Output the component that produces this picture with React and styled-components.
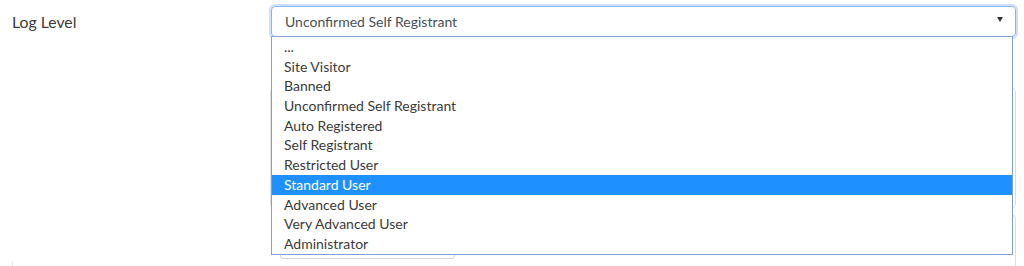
import React from "react";
import styled, { createGlobalStyle } from "styled-components";

const GlobalStyle = createGlobalStyle`
  html, body {
    margin: 0;
    background: #fff;
    overflow: hidden;
  }
  body {
    font-family: Lato, "Noto Sans", sans-serif;
    font-size: 14px;
    color: #333;
  }
`;

const levels = [
  "...",
  "Site Visitor",
  "Banned",
  "Unconfirmed Self Registrant",
  "Auto Registered",
  "Self Registrant",
  "Restricted User",
  "Standard User",
  "Advanced User",
  "Very Advanced User",
  "Administrator",
];

const Page = styled.div`
  height: 266px;
  overflow: hidden;
`;

const Row = styled.div`
  display: flex;
  padding: 6px 0 0 12px;
`;

const LabelCol = styled.div`
  width: 258px;
  flex: none;
`;

const Label = styled.div`
  font-size: 15.8px;
  line-height: 20px;
  padding-top: 6px;
  color: #3a3a3a;
`;

const Rule = styled.div`
  margin-top: 230px;
  height: 10px;
  border-left: 1px solid #e3e3e3;
`;

const Control = styled.div`
  position: relative;
  width: 746px;
`;

const SelectBox = styled.div`
  height: 29px;
  margin-left: 1px;
  width: 718px;
  border: 1px solid #86b7f7;
  border-radius: 4px;
  box-shadow: 0 0 0 2px rgba(90, 150, 240, 0.3);
  display: flex;
  align-items: center;
  justify-content: space-between;
  padding: 0 12px 0 13px;
  color: #495057;
  font-size: 14px;
`;

const Caret = styled.span`
  width: 0;
  height: 0;
  border-left: 3px solid transparent;
  border-right: 3px solid transparent;
  border-top: 5px solid #333;
  margin-top: -4px;
`;

const Panel = styled.div`
  border: 1px solid #dedede;
  border-left-color: ${(p) => (p.$open ? "transparent" : "#dedede")};
  border-radius: 4px;
  height: ${(p) => p.$h}px;
  margin-top: ${(p) => p.$gap}px;
  padding: 10px 9px;
  box-sizing: border-box;
  display: flex;
  flex-direction: column;
  justify-content: flex-end;
`;

const Input = styled.div`
  width: 173px;
  height: 30px;
  border: 1px solid #d6d6d6;
  border-radius: 3px;
  margin-bottom: 5px;
`;

const List = styled.ul`
  position: absolute;
  top: 30px;
  left: 1px;
  width: 740px;
  margin: 0;
  padding: 0;
  list-style: none;
  background: #fff;
  border: 1px solid #7f9fd6;
`;

const Item = styled.li`
  height: 19.7px;
  line-height: 19.7px;
  padding-left: 12px;
  font-size: 14px;
  white-space: nowrap;
  background: ${(p) => (p.$active ? "#1e90ff" : "transparent")};
  color: ${(p) => (p.$active ? "#fff" : "#3a3a3a")};
`;

export default function App() {
  return (
    <Page>
      <GlobalStyle />
      <Row>
        <LabelCol>
          <Label>Log Level</Label>
          <Rule />
        </LabelCol>
        <Control>
          <SelectBox>
            <span>Unconfirmed Self Registrant</span>
            <Caret />
          </SelectBox>
          <Panel $h={120} $gap={51} />
          <Panel $h={60} $gap={7} $open>
            <Input />
          </Panel>
          <List>
            {levels.map((l) => (
              <Item key={l} $active={l === "Standard User"}>
                {l}
              </Item>
            ))}
          </List>
        </Control>
      </Row>
    </Page>
  );
}
